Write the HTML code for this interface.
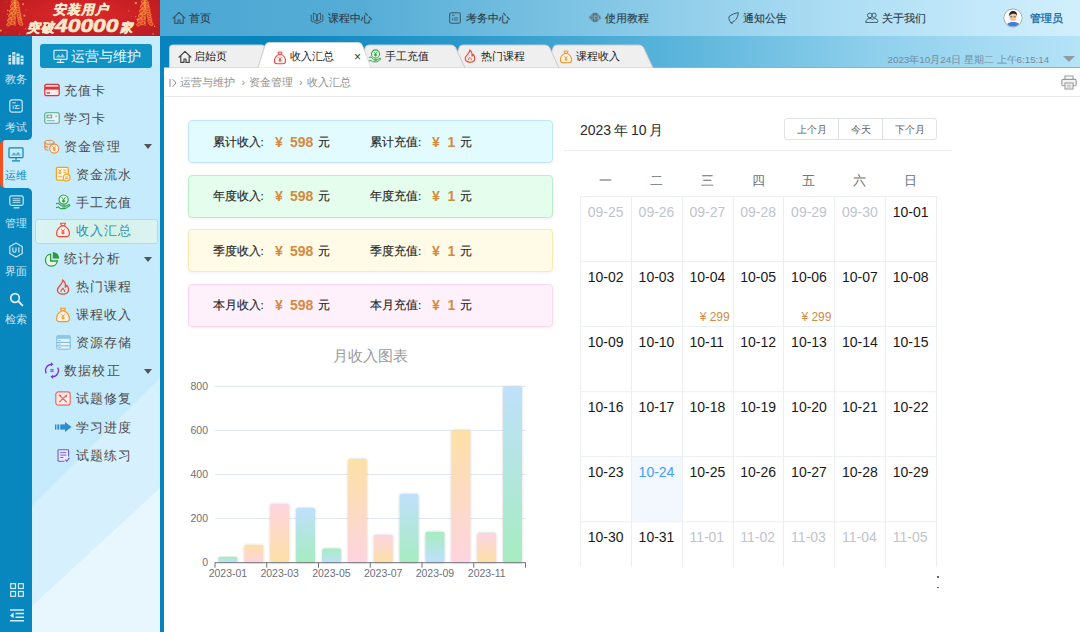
<!DOCTYPE html>
<html lang="zh"><head><meta charset="utf-8"><title>收入汇总</title>
<style>
*{box-sizing:border-box;margin:0;padding:0}
html,body{width:1080px;height:632px;overflow:hidden;background:#fff}
body{font-family:"Liberation Sans",sans-serif;position:relative;color:#333}
.abs{position:absolute}
.t{position:absolute;white-space:nowrap;line-height:1}
#banner{left:0;top:0;width:160px;height:36px;background:radial-gradient(ellipse at 50% 40%,#e02a2c 0%,#c92024 55%,#b71c22 100%);overflow:hidden}
#banner .l1{left:0;width:160px;text-align:center;top:3px;font-size:13px;font-weight:bold;font-style:italic;color:#fbeed4;letter-spacing:1px}
#banner .l2{left:0;width:160px;text-align:center;top:17px;font-size:13px;font-weight:bold;font-style:italic;color:#fbeed4}
#banner .l2 b{font-size:19px;letter-spacing:2px;position:relative;top:1px;margin-left:1px}
#nav{left:160px;top:0;width:920px;height:36px;background:linear-gradient(90deg,#4ba7d3 0%,#55add6 22%,#86c8e6 50%,#aadcf3 72%,#c4e9fa 90%,#d0effc 100%)}
#nav .t{top:13px;font-size:11px;color:#2c414d;-webkit-text-stroke:.15px #2c414d}
#tabbar{left:160px;top:36px;width:920px;height:32px;background:linear-gradient(90deg,#0784bd 0%,#0985be 12%,#2d9bcc 35%,#58b3da 55%,#8fd0ec 78%,#b5e3f8 100%);border-bottom:1px solid #a9a9a9}
#strip{left:0;top:36px;width:32px;height:596px;background:#0886be}
#strip .t{left:0;width:32px;text-align:center;font-size:11px;color:#cbe6f4}
#side{left:32px;top:36px;width:128px;height:596px;background:#c6ebfd;overflow:hidden}
#edge{left:160px;top:36px;width:4px;height:596px;background:#0784bd}
.mi{position:absolute;white-space:nowrap;line-height:1;font-size:13px;letter-spacing:1.200px;color:#4d4d4d}
.ic{position:absolute;line-height:0}
.arrow{position:absolute;width:0;height:0;border-left:4.5px solid transparent;border-right:4.5px solid transparent;border-top:5px solid #555}
#content{left:164px;top:68px;width:916px;height:564px;background:#fff;border-top-left-radius:4px}
.card{position:absolute;left:188px;width:365px;height:43px;border-radius:4px;border:1px solid;box-shadow:0 1px 3px rgba(0,0,0,.06)}
.card .t{top:15.500px;font-size:11.500px;color:#262626;-webkit-text-stroke:.15px #262626}
.card .v{font-weight:bold;font-size:14px;color:#d58a3e;top:13.500px;-webkit-text-stroke:0}
.cal-d{position:absolute;white-space:nowrap;line-height:1;font-size:14px;color:#1a1a1a}
.cal-d.o{color:#c0c4cc}
.wk{position:absolute;white-space:nowrap;line-height:1;font-size:13px;color:#6e7178;width:50px;text-align:center}
</style></head><body>

<div id="banner" class="abs">
<svg class="abs" style="left:0;top:0" width="160" height="36" viewBox="0 0 160 36">
<ellipse cx="13.4" cy="1.5" rx="2.3" ry="1.500" fill="#e43a26" stroke="#f2b443" stroke-width=".5" transform="rotate(-25 13.4 1.5)"/><ellipse cx="16.6" cy="2.2" rx="2.3" ry="1.500" fill="#e43a26" stroke="#f2b443" stroke-width=".5" transform="rotate(25 16.6 1.5)"/><ellipse cx="14.2" cy="3.9" rx="2.3" ry="1.500" fill="#e43a26" stroke="#f2b443" stroke-width=".5" transform="rotate(-25 14.2 3.9)"/><ellipse cx="17.3" cy="4.6" rx="2.3" ry="1.500" fill="#e43a26" stroke="#f2b443" stroke-width=".5" transform="rotate(25 17.3 3.9)"/><ellipse cx="12.5" cy="5.3" rx="2.3" ry="1.500" fill="#e43a26" stroke="#f2b443" stroke-width=".5" transform="rotate(-25 12.5 3.9)"/><ellipse cx="12.5" cy="6.3" rx="2.3" ry="1.500" fill="#e43a26" stroke="#f2b443" stroke-width=".5" transform="rotate(-25 12.5 6.3)"/><ellipse cx="17.5" cy="7.0" rx="2.3" ry="1.500" fill="#e43a26" stroke="#f2b443" stroke-width=".5" transform="rotate(25 17.5 6.3)"/><ellipse cx="13.8" cy="8.7" rx="2.3" ry="1.500" fill="#e43a26" stroke="#f2b443" stroke-width=".5" transform="rotate(-25 13.8 8.7)"/><ellipse cx="18.2" cy="9.4" rx="2.3" ry="1.500" fill="#e43a26" stroke="#f2b443" stroke-width=".5" transform="rotate(25 18.2 8.7)"/><ellipse cx="11.5" cy="10.1" rx="2.3" ry="1.500" fill="#e43a26" stroke="#f2b443" stroke-width=".5" transform="rotate(-25 11.5 8.7)"/><ellipse cx="11.6" cy="11.1" rx="2.3" ry="1.500" fill="#e43a26" stroke="#f2b443" stroke-width=".5" transform="rotate(-25 11.6 11.1)"/><ellipse cx="18.4" cy="11.8" rx="2.3" ry="1.500" fill="#e43a26" stroke="#f2b443" stroke-width=".5" transform="rotate(25 18.4 11.1)"/><ellipse cx="13.5" cy="13.5" rx="2.3" ry="1.500" fill="#e43a26" stroke="#f2b443" stroke-width=".5" transform="rotate(-25 13.5 13.5)"/><ellipse cx="19.2" cy="14.2" rx="2.3" ry="1.500" fill="#e43a26" stroke="#f2b443" stroke-width=".5" transform="rotate(25 19.2 13.5)"/><ellipse cx="10.4" cy="14.9" rx="2.3" ry="1.500" fill="#e43a26" stroke="#f2b443" stroke-width=".5" transform="rotate(-25 10.4 13.5)"/><ellipse cx="10.7" cy="15.9" rx="2.3" ry="1.500" fill="#e43a26" stroke="#f2b443" stroke-width=".5" transform="rotate(-25 10.7 15.9)"/><ellipse cx="19.3" cy="16.6" rx="2.3" ry="1.500" fill="#e43a26" stroke="#f2b443" stroke-width=".5" transform="rotate(25 19.3 15.9)"/><ellipse cx="13.1" cy="18.3" rx="2.3" ry="1.500" fill="#e43a26" stroke="#f2b443" stroke-width=".5" transform="rotate(-25 13.1 18.3)"/><ellipse cx="20.2" cy="19.0" rx="2.3" ry="1.500" fill="#e43a26" stroke="#f2b443" stroke-width=".5" transform="rotate(25 20.2 18.3)"/><ellipse cx="9.3" cy="19.7" rx="2.3" ry="1.500" fill="#e43a26" stroke="#f2b443" stroke-width=".5" transform="rotate(-25 9.3 18.3)"/><ellipse cx="9.8" cy="20.7" rx="2.3" ry="1.500" fill="#e43a26" stroke="#f2b443" stroke-width=".5" transform="rotate(-25 9.8 20.7)"/><ellipse cx="20.2" cy="21.4" rx="2.3" ry="1.500" fill="#e43a26" stroke="#f2b443" stroke-width=".5" transform="rotate(25 20.2 20.7)"/><ellipse cx="12.7" cy="23.1" rx="2.3" ry="1.500" fill="#e43a26" stroke="#f2b443" stroke-width=".5" transform="rotate(-25 12.7 23.1)"/><ellipse cx="21.2" cy="23.8" rx="2.3" ry="1.500" fill="#e43a26" stroke="#f2b443" stroke-width=".5" transform="rotate(25 21.2 23.1)"/><ellipse cx="8.2" cy="24.5" rx="2.3" ry="1.500" fill="#e43a26" stroke="#f2b443" stroke-width=".5" transform="rotate(-25 8.2 23.1)"/><path d="M15 0V26" stroke="#f2c14e" stroke-width=".6"/>
<ellipse cx="143.4" cy="1.5" rx="2.3" ry="1.500" fill="#e43a26" stroke="#f2b443" stroke-width=".5" transform="rotate(-25 143.4 1.5)"/><ellipse cx="146.6" cy="2.2" rx="2.3" ry="1.500" fill="#e43a26" stroke="#f2b443" stroke-width=".5" transform="rotate(25 146.6 1.5)"/><ellipse cx="144.2" cy="3.9" rx="2.3" ry="1.500" fill="#e43a26" stroke="#f2b443" stroke-width=".5" transform="rotate(-25 144.2 3.9)"/><ellipse cx="147.3" cy="4.6" rx="2.3" ry="1.500" fill="#e43a26" stroke="#f2b443" stroke-width=".5" transform="rotate(25 147.3 3.9)"/><ellipse cx="142.5" cy="5.3" rx="2.3" ry="1.500" fill="#e43a26" stroke="#f2b443" stroke-width=".5" transform="rotate(-25 142.5 3.9)"/><ellipse cx="142.5" cy="6.3" rx="2.3" ry="1.500" fill="#e43a26" stroke="#f2b443" stroke-width=".5" transform="rotate(-25 142.5 6.3)"/><ellipse cx="147.5" cy="7.0" rx="2.3" ry="1.500" fill="#e43a26" stroke="#f2b443" stroke-width=".5" transform="rotate(25 147.5 6.3)"/><ellipse cx="143.8" cy="8.7" rx="2.3" ry="1.500" fill="#e43a26" stroke="#f2b443" stroke-width=".5" transform="rotate(-25 143.8 8.7)"/><ellipse cx="148.2" cy="9.4" rx="2.3" ry="1.500" fill="#e43a26" stroke="#f2b443" stroke-width=".5" transform="rotate(25 148.2 8.7)"/><ellipse cx="141.5" cy="10.1" rx="2.3" ry="1.500" fill="#e43a26" stroke="#f2b443" stroke-width=".5" transform="rotate(-25 141.5 8.7)"/><ellipse cx="141.6" cy="11.1" rx="2.3" ry="1.500" fill="#e43a26" stroke="#f2b443" stroke-width=".5" transform="rotate(-25 141.6 11.1)"/><ellipse cx="148.4" cy="11.8" rx="2.3" ry="1.500" fill="#e43a26" stroke="#f2b443" stroke-width=".5" transform="rotate(25 148.4 11.1)"/><ellipse cx="143.5" cy="13.5" rx="2.3" ry="1.500" fill="#e43a26" stroke="#f2b443" stroke-width=".5" transform="rotate(-25 143.5 13.5)"/><ellipse cx="149.2" cy="14.2" rx="2.3" ry="1.500" fill="#e43a26" stroke="#f2b443" stroke-width=".5" transform="rotate(25 149.2 13.5)"/><ellipse cx="140.4" cy="14.9" rx="2.3" ry="1.500" fill="#e43a26" stroke="#f2b443" stroke-width=".5" transform="rotate(-25 140.4 13.5)"/><ellipse cx="140.7" cy="15.9" rx="2.3" ry="1.500" fill="#e43a26" stroke="#f2b443" stroke-width=".5" transform="rotate(-25 140.7 15.9)"/><ellipse cx="149.3" cy="16.6" rx="2.3" ry="1.500" fill="#e43a26" stroke="#f2b443" stroke-width=".5" transform="rotate(25 149.3 15.9)"/><ellipse cx="143.1" cy="18.3" rx="2.3" ry="1.500" fill="#e43a26" stroke="#f2b443" stroke-width=".5" transform="rotate(-25 143.1 18.3)"/><ellipse cx="150.2" cy="19.0" rx="2.3" ry="1.500" fill="#e43a26" stroke="#f2b443" stroke-width=".5" transform="rotate(25 150.2 18.3)"/><ellipse cx="139.3" cy="19.7" rx="2.3" ry="1.500" fill="#e43a26" stroke="#f2b443" stroke-width=".5" transform="rotate(-25 139.3 18.3)"/><ellipse cx="139.8" cy="20.7" rx="2.3" ry="1.500" fill="#e43a26" stroke="#f2b443" stroke-width=".5" transform="rotate(-25 139.8 20.7)"/><ellipse cx="150.2" cy="21.4" rx="2.3" ry="1.500" fill="#e43a26" stroke="#f2b443" stroke-width=".5" transform="rotate(25 150.2 20.7)"/><ellipse cx="142.7" cy="23.1" rx="2.3" ry="1.500" fill="#e43a26" stroke="#f2b443" stroke-width=".5" transform="rotate(-25 142.7 23.1)"/><ellipse cx="151.2" cy="23.8" rx="2.3" ry="1.500" fill="#e43a26" stroke="#f2b443" stroke-width=".5" transform="rotate(25 151.2 23.1)"/><ellipse cx="138.2" cy="24.5" rx="2.3" ry="1.500" fill="#e43a26" stroke="#f2b443" stroke-width=".5" transform="rotate(-25 138.2 23.1)"/><path d="M145 0V26" stroke="#f2c14e" stroke-width=".6"/>
<circle cx="131.3" cy="16.3" r="0.5" fill="#f6c65a" opacity="0.41"/>
<circle cx="16.5" cy="7.5" r="0.8" fill="#f6c65a" opacity="0.54"/>
<circle cx="5.2" cy="32.1" r="0.4" fill="#f6c65a" opacity="0.72"/>
<circle cx="7.8" cy="10.5" r="0.8" fill="#f6c65a" opacity="0.77"/>
<circle cx="25.6" cy="28.7" r="0.6" fill="#f6c65a" opacity="0.59"/>
<circle cx="135.9" cy="3.0" r="1.1" fill="#f6c65a" opacity="0.83"/>
<circle cx="137.6" cy="19.5" r="1.0" fill="#f6c65a" opacity="0.82"/>
<circle cx="141.2" cy="14.7" r="0.5" fill="#f6c65a" opacity="0.55"/>
<circle cx="24.4" cy="15.7" r="1.1" fill="#f6c65a" opacity="0.66"/>
<circle cx="19.4" cy="33.9" r="0.5" fill="#f6c65a" opacity="0.61"/>
<circle cx="148.2" cy="6.2" r="0.7" fill="#f6c65a" opacity="0.69"/>
<circle cx="134.4" cy="3.4" r="0.4" fill="#f6c65a" opacity="0.51"/>
<circle cx="23.0" cy="4.2" r="1.1" fill="#f6c65a" opacity="0.55"/>
<circle cx="0.8" cy="30.5" r="1.1" fill="#f6c65a" opacity="0.77"/>
<circle cx="128.6" cy="10.9" r="0.5" fill="#f6c65a" opacity="0.73"/>
<circle cx="25.8" cy="10.0" r="0.5" fill="#f6c65a" opacity="0.62"/>
<circle cx="4.1" cy="11.3" r="0.4" fill="#f6c65a" opacity="0.42"/>
<circle cx="153.1" cy="33.9" r="0.8" fill="#f6c65a" opacity="0.62"/>
<circle cx="6.2" cy="2.0" r="0.4" fill="#f6c65a" opacity="0.48"/>
<circle cx="20.3" cy="18.6" r="0.8" fill="#f6c65a" opacity="0.56"/>
<circle cx="154.7" cy="26.3" r="0.7" fill="#f6c65a" opacity="0.89"/>
<circle cx="135.7" cy="16.7" r="0.6" fill="#f6c65a" opacity="0.62"/>
<circle cx="19.4" cy="17.0" r="0.4" fill="#f6c65a" opacity="0.53"/>
<circle cx="7.3" cy="14.2" r="0.6" fill="#f6c65a" opacity="0.56"/>
<circle cx="26.7" cy="33.7" r="0.7" fill="#f6c65a" opacity="0.85"/>
<circle cx="19.6" cy="16.8" r="0.5" fill="#f6c65a" opacity="0.51"/>
</svg>
<svg class="abs" style="left:0;top:0" width="160" height="36" viewBox="0 0 160 36" font-family="Liberation Sans, sans-serif" font-weight="bold" font-style="italic" fill="#f8e9cc" stroke="#f8e9cc" stroke-linejoin="round"><text x="52.500" y="14" font-size="13" textLength="55.500" lengthAdjust="spacing" stroke-width=".45">安装用户</text><text x="27" y="31.800" font-size="13" textLength="26.500" lengthAdjust="spacing" stroke-width=".45">突破</text><text x="55" y="32" font-size="17.500" textLength="63.500" lengthAdjust="spacingAndGlyphs" stroke-width=".6">40000</text><text x="119.500" y="31.800" font-size="12.500" stroke-width=".45">家</text></svg>
</div>
<div id="nav" class="abs">
<div class="ic" style="left:12px;top:11px"><svg width="14" height="14" viewBox="0 0 14 14"><path d="M1 7.200L7 1.400l6 5.800M2.800 6v6.400h3.200V9h2v3.400h3.200V6" fill="none" stroke="#3d5766" stroke-width="1.200" stroke-linejoin="round" stroke-linecap="round"/></svg></div><div class="t" style="left:29px">首页</div>
<div class="ic" style="left:150px;top:11.5px"><svg width="14" height="12" viewBox="0 0 14 12"><path d="M1.200 2.800v6.200l5.800 2.500 5.800-2.500V2.800" fill="none" stroke="#3d5766" stroke-width="1" stroke-linejoin="round"/><path d="M3.400 1l3.200 1.600v6.600L3.400 7.800zM10.600 1L7.400 2.600v6.600l3.200-1.400z" fill="none" stroke="#3d5766" stroke-width=".95" stroke-linejoin="round"/></svg></div><div class="t" style="left:167.5px">课程中心</div>
<div class="ic" style="left:289px;top:12px"><svg width="12" height="12" viewBox="0 0 13 13"><rect x=".7" y=".7" width="11.600" height="11.600" rx="2" fill="none" stroke="#3d5766" stroke-width="1.100"/><path d="M3 3.400h3.400M5.400 6.400h4.600M5.400 8.600h4.600M4 6.200v3" stroke="#3d5766" stroke-width=".9" fill="none"/></svg></div><div class="t" style="left:306px">考务中心</div>
<div class="ic" style="left:427.5px;top:12px"><svg width="14" height="11" viewBox="0 0 14 11"><ellipse cx="7" cy="5.500" rx="4.600" ry="4.700" fill="#4a6473" opacity=".9"/><path d="M7 .8v9.400M4.600 1.600c-1 2.400-1 5.400 0 7.800M9.400 1.600c1 2.400 1 5.400 0 7.800" fill="none" stroke="#8fb8cf" stroke-width=".5"/><rect x="0.600" y="3.700" width="12.800" height="3.600" fill="#8db4c9"/><path d="M2 6.800V4.200l1.600 2.600V4.200M6 4.200H4.700v2.600H6M4.700 5.500h1M6.800 4.200l.7 2.600.7-2 .7 2 .7-2.600M12.200 4.300h-1.300v1.100h1.300v1.300h-1.400" fill="none" stroke="#3d5766" stroke-width=".55"/></svg></div><div class="t" style="left:445px">使用教程</div>
<div class="ic" style="left:567.5px;top:12px"><svg width="11" height="12" viewBox="0 0 11 12"><path d="M10.300 .7C7.400 1 3.400 2.400 .9 4.800C.6 7.200 1.500 9.400 3.300 10.700C7 9.400 10 6 10.300 .7Z" fill="none" stroke="#3d5766" stroke-width="1" stroke-linejoin="round"/><path d="M2.800 10.600l1.300.8" stroke="#3d5766" stroke-width="1.100" stroke-linecap="round"/></svg></div><div class="t" style="left:583px">通知公告</div>
<div class="ic" style="left:705px;top:12px"><svg width="13.500" height="11.700" viewBox="0 0 15 13"><circle cx="5.400" cy="3.800" r="2.600" fill="none" stroke="#3d5766" stroke-width="1.050"/><circle cx="10" cy="3.600" r="2.400" fill="none" stroke="#3d5766" stroke-width="1.050"/><path d="M.8 11.600c0-2.600 1.800-4.400 4.600-4.400 1.200 0 2.200.4 3 1 .6-.6 1.400-1 2.400-1 2 0 3.400 1.400 3.400 3.600 0 .6-.4.800-.8.800H.8z" fill="none" stroke="#3d5766" stroke-width="1.050" stroke-linejoin="round"/></svg></div><div class="t" style="left:721.5px">关于我们</div>
<svg class="abs" style="left:843px;top:8.300px" width="20" height="20" viewBox="0 0 20 20"><defs><clipPath id="av"><circle cx="10" cy="10" r="8.600"/></clipPath></defs><circle cx="10" cy="10" r="9" fill="#fff" stroke="#7f8a92" stroke-width=".8"/><g clip-path="url(#av)"><rect x="0" y="0" width="20" height="20" fill="#fdfdfd"/><path d="M2.500 20c0-4 3-6 7.500-6s7.500 2 7.500 6z" fill="#3f7fd6"/><ellipse cx="10" cy="9" rx="3.600" ry="4.200" fill="#f1c7a4"/><path d="M6.200 8c-.4-3 1.400-5 4-5s4.200 1.600 3.800 5c-.6-1.400-1.400-2.200-2.600-2.200-1.800 0-3.800.2-5.200 2.200z" fill="#2a2420"/><path d="M7.200 8.800h2.200M10.600 8.800h2.200" stroke="#333" stroke-width=".7"/></g></svg>
<div class="t" style="left:870px;color:#0d64a6;-webkit-text-stroke:.25px #0d64a6">管理员</div>
</div>
<div id="tabbar" class="abs"></div>
<svg class="abs" style="left:160px;top:36px" width="920" height="32" viewBox="0 0 920 32">
<path d="M386 32L393 12Q393.5 9 397 9H479Q482.5 9 483.8 12L493 32Z" fill="#efefef" stroke="#c9c9c9" stroke-width="1"/>
<path d="M292 32L299 12Q299.5 9 303 9H385Q388.5 9 389.8 12L399 32Z" fill="#efefef" stroke="#c9c9c9" stroke-width="1"/>
<path d="M198 32L205 12Q205.5 9 209 9H291Q294.5 9 295.8 12L305 32Z" fill="#efefef" stroke="#c9c9c9" stroke-width="1"/>
<path d="M9.500 32V12Q9.500 9 12.500 9H102Q105 9 104 12L98 32Z" fill="#efefef" stroke="#c9c9c9" stroke-width="1"/>
<path d="M98 32L105 9.500Q106 6.500 109 6.500H198Q201.500 6.500 202.500 9.500L211 32Z" fill="#fff" stroke="#d4d4d4" stroke-width=".8"/>
</svg>
<div class="ic" style="left:178px;top:50px"><svg width="14" height="14" viewBox="0 0 14 14"><path d="M1 7.200L7 1.400l6 5.800M2.800 6v6.400h3.200V9h2v3.400h3.200V6" fill="none" stroke="#444" stroke-width="1.200" stroke-linejoin="round" stroke-linecap="round"/></svg></div><div class="t" style="left:193.500px;top:51px;font-size:11px;color:#222">启始页</div>
<div class="ic" style="left:273px;top:50.500px"><svg width="14" height="14" viewBox="0 0 16 16"><path d="M5.6 1.2h4.8l-.9 2.6H6.5z" fill="#fdeeee" stroke="#ea4a3a" stroke-width="1.1" stroke-linejoin="round"/><path d="M6.4 3.9C3.6 5.6 1.6 8.6 1.6 11.4c0 2 1.3 3.2 3.2 3.2h6.4c1.9 0 3.2-1.2 3.2-3.2 0-2.8-2-5.8-4.8-7.5z" fill="#fdeeee" stroke="#ea4a3a" stroke-width="1.2" stroke-linejoin="round"/><path d="M6.4 7.2L8 9.4l1.6-2.2M8 9.4v3M6.5 10h3M6.5 11.3h3" fill="none" stroke="#ea4a3a" stroke-width="0.95"/></svg></div><div class="t" style="left:290px;top:51px;font-size:11px;color:#222">收入汇总</div>
<div class="t" style="left:354px;top:51px;font-size:12px;color:#333">×</div>
<div class="ic" style="left:368px;top:49px"><svg width="14" height="14" viewBox="0 0 16 16"><circle cx="8.6" cy="5.6" r="4.6" fill="#e9f8ec" stroke="#2fa446" stroke-width="1.2"/><path d="M6.8 3.3l1.8 2.4 1.8-2.4M8.6 5.6v3M7 6.3h3.2M7 7.5h3.2" fill="none" stroke="#2fa446" stroke-width="0.95"/><path d="M1 9.6l2.4-.4 2.8 2.6h3.4c.8 0 .8 1.2 0 1.2H7.4M9.8 12.4l4-1.8c.9-.3 1.4.7.7 1.2l-4.3 2.8H5.4L3.4 13 1 13.6" fill="none" stroke="#2fa446" stroke-width="1.1" stroke-linejoin="round"/></svg></div><div class="t" style="left:385px;top:51px;font-size:11px;color:#222">手工充值</div>
<div class="ic" style="left:464px;top:49px"><svg width="12" height="14" viewBox="0 0 14 16"><path d="M6.6 1c.5 2.2-.8 3.4-2.2 5C3 7.600 1.400 9 1.400 11c0 2.400 2.200 4.200 5.400 4.200s5.800-1.800 5.800-4.600c0-1.800-.8-3.200-1.800-4.400-.2 1-.7 1.700-1.500 2C9.800 5.400 8.800 2.600 6.600 1z" fill="none" stroke="#f0492e" stroke-width="1.3" stroke-linejoin="round"/><path d="M5 12.400c0-1.400 1-2 1.800-3 .8 1 2 1.800 2 3" fill="none" stroke="#f0492e" stroke-width="1.1" stroke-linecap="round"/></svg></div><div class="t" style="left:480.500px;top:51px;font-size:11px;color:#222">热门课程</div>
<div class="ic" style="left:559px;top:49.500px"><svg width="14" height="14" viewBox="0 0 16 16"><path d="M5.6 1.2h4.8l-.9 2.6H6.5z" fill="#fff3df" stroke="#f0962a" stroke-width="1.1" stroke-linejoin="round"/><path d="M6.4 3.9C3.6 5.6 1.6 8.6 1.6 11.4c0 2 1.3 3.2 3.2 3.2h6.4c1.9 0 3.2-1.2 3.2-3.2 0-2.8-2-5.8-4.8-7.5z" fill="#fff3df" stroke="#f0962a" stroke-width="1.2" stroke-linejoin="round"/><path d="M6.4 7.2L8 9.4l1.6-2.2M8 9.4v3M6.5 10h3M6.5 11.3h3" fill="none" stroke="#f0962a" stroke-width="0.95"/></svg></div><div class="t" style="left:576px;top:51px;font-size:11px;color:#222">课程收入</div>
<div class="t" style="left:887.500px;top:54.500px;font-size:9.800px;color:#718b9c">2023年10月24日 星期二 上午6:15:14</div>
<div class="abs" style="left:1063px;top:56px;width:0;height:0;border-left:6px solid transparent;border-right:6px solid transparent;border-top:6px solid #8f9aa2"></div>
<div id="strip" class="abs">
<div class="abs" style="left:0;top:104px;width:32px;height:48.400px;background:#c6ebfd;border-left:3px solid #f4511e;border-radius:5px 0 0 5px"></div><div class="abs" style="left:28px;top:100px;width:4px;height:4px;background:radial-gradient(circle at 0 0,rgba(198,235,253,0) 3.400px,#c6ebfd 4px)"></div><div class="abs" style="left:28px;top:152.400px;width:4px;height:4px;background:radial-gradient(circle at 0 100%,rgba(198,235,253,0) 3.400px,#c6ebfd 4px)"></div>
<div class="ic" style="left:8.0px;top:15.0px"><svg width="16" height="14" viewBox="0 0 16 14"><rect x="0.500" y="4" width="2.600" height="9.500" rx=".6" fill="#cbe6f4"/><rect x="4.200" y="1" width="3.200" height="12.500" rx=".6" fill="#cbe6f4"/><rect x="8.400" y="2.600" width="3.200" height="10.900" rx=".6" fill="#cbe6f4"/><rect x="12.600" y="4.600" width="2.900" height="8.900" rx=".6" fill="#cbe6f4"/><path d="M.5 6.500h2.600M.5 10.500h2.600M4.200 4h3.200M8.400 5.600h3.200M12.600 7.400h2.900M12.600 10.400h2.900" stroke="#0886be" stroke-width=".9"/></svg></div>
<div class="t" style="top:37.5px;color:#cbe6f4">教务</div>
<div class="ic" style="left:9.0px;top:63.0px"><svg width="14" height="14" viewBox="0 0 14 14"><rect x=".8" y=".8" width="12.400" height="12.400" rx="2.200" fill="none" stroke="#cbe6f4" stroke-width="1.200"/><path d="M3.200 3.800h3.600" stroke="#cbe6f4" stroke-width="1"/><path d="M5.600 6.600h5M5.600 9.400h5M4.200 6.400v3.600M7.600 6.600l-1 3.200" stroke="#cbe6f4" stroke-width=".9" fill="none"/></svg></div>
<div class="t" style="top:85.5px;color:#cbe6f4">考试</div>
<div class="ic" style="left:8.0px;top:110.5px"><svg width="16" height="15" viewBox="0 0 16 15"><rect x="1" y=".8" width="14" height="9.800" rx=".8" fill="none" stroke="#0a84bb" stroke-width="1.200"/><path d="M3 8.600l3-3.400 2 2.200 2-3 3 4.200z" fill="#0a84bb" opacity=".55"/><path d="M8 10.600v2.200M4 13.800h8" stroke="#0a84bb" stroke-width="1.300"/></svg></div>
<div class="t" style="top:133.5px;color:#0a84bb">运维</div>
<div class="ic" style="left:8.5px;top:159.0px"><svg width="15" height="14" viewBox="0 0 15 14"><rect x=".8" y=".8" width="13.400" height="9.600" rx="1.800" fill="none" stroke="#cbe6f4" stroke-width="1.200"/><path d="M3.600 3.800h7.800M3.600 5.600h7.800M3.600 7.400h7.800" stroke="#cbe6f4" stroke-width=".9"/><path d="M4.600 12.800h5.800" stroke="#cbe6f4" stroke-width="1.300"/></svg></div>
<div class="t" style="top:181.5px;color:#cbe6f4">管理</div>
<div class="ic" style="left:8.0px;top:206.0px"><svg width="16" height="16" viewBox="0 0 16 16"><path d="M8 .9l6.200 3.500v7.200L8 15.100 1.800 11.600V4.400z" fill="none" stroke="#cbe6f4" stroke-width="1.200" stroke-linejoin="round"/><path d="M4.800 5.400v3.200c0 2.200 3.200 2.200 3.200 0V5.400M10.800 5.200v5.200" fill="none" stroke="#cbe6f4" stroke-width="1.200"/></svg></div>
<div class="t" style="top:229.5px;color:#cbe6f4">界面</div>
<div class="ic" style="left:8.5px;top:256.0px"><svg width="15" height="15" viewBox="0 0 15 15"><circle cx="6" cy="6" r="4.300" fill="none" stroke="#e2f1f9" stroke-width="1.700"/><path d="M9.400 9.400l4 4" stroke="#e2f1f9" stroke-width="2" stroke-linecap="round"/></svg></div>
<div class="t" style="top:277.5px;color:#cbe6f4">检索</div>
<svg class="abs" style="left:10px;top:547px" width="14" height="14" viewBox="0 0 14 14"><rect x=".7" y=".7" width="4.800" height="4.800" fill="none" stroke="#d6ecf7" stroke-width="1.200"/><rect x="8.500" y=".7" width="4.800" height="4.800" fill="none" stroke="#d6ecf7" stroke-width="1.200"/><rect x=".7" y="8.500" width="4.800" height="4.800" fill="none" stroke="#d6ecf7" stroke-width="1.200"/><rect x="8.500" y="8.500" width="4.800" height="4.800" fill="none" stroke="#d6ecf7" stroke-width="1.200"/></svg>
<svg class="abs" style="left:10px;top:573px" width="14" height="13" viewBox="0 0 14 13"><path d="M0 1h14M5.500 4.600H14M5.500 8.200H14M0 11.800h14" stroke="#d6ecf7" stroke-width="1.500"/><path d="M3.600 3.600v5.600L0 6.400z" fill="#d6ecf7"/></svg>
</div>
<div id="side" class="abs">
<svg class="abs" style="left:0;top:0" width="128" height="596" viewBox="0 0 128 596"><path d="M128 342L0 470V596H128Z" fill="#d6f0fe"/><path d="M128 452L0 570V596H128Z" fill="#e8f7fe"/></svg>
<div class="abs" style="left:8px;top:8px;width:112px;height:24px;background:#0e93c4;border-radius:3px"></div>
<svg class="abs" style="left:21px;top:13px" width="15" height="15" viewBox="0 0 16 15"><rect x="1" y=".8" width="14" height="9.800" rx=".8" fill="none" stroke="#e8f6fd" stroke-width="1.200"/><path d="M3 8.600l3-3.400 2 2.200 2-3 3 4.200z" fill="#e8f6fd" opacity=".6"/><path d="M8 10.600v2.200M4 13.800h8" stroke="#e8f6fd" stroke-width="1.300"/></svg>
<div class="t" style="left:39px;top:13px;font-size:14px;color:#f2fbff">运营与维护</div>
<div class="abs" style="left:2.500px;top:183px;width:123px;height:24.500px;background:linear-gradient(90deg,#dbf3f4,#d4f2e6 60%,#dbf3f4);border:1px solid #a9dcf6;border-radius:3px"></div>
<div class="ic" style="left:11.5px;top:47.0px"><svg width="16" height="14" viewBox="0 0 16 14"><rect x="0.8" y="1.3" width="14.4" height="11.4" rx="1.6" fill="#fdeaea" stroke="#d9363e" stroke-width="1.3"/><rect x="1" y="3.6" width="14" height="3" fill="#d9363e"/><rect x="2.6" y="9.3" width="3.4" height="1.3" fill="#d9363e"/></svg></div><div class="mi" style="left:32px;top:47.5px;color:#4d4d4d">充值卡</div>
<div class="ic" style="left:11.5px;top:75.1px"><svg width="16" height="14" viewBox="0 0 16 14"><rect x="0.8" y="1.8" width="14.4" height="10.4" rx="1.4" fill="#e8f6ef" stroke="#5aa58a" stroke-width="1.1"/><rect x="3" y="4.2" width="4.6" height="2.6" fill="none" stroke="#5aa58a" stroke-width="1"/><rect x="2.8" y="9" width="8" height="1.2" fill="#8ab8d8"/><rect x="11.2" y="4.6" width="2" height="1.2" fill="#8ab8d8"/></svg></div><div class="mi" style="left:32px;top:75.6px;color:#4d4d4d">学习卡</div>
<div class="ic" style="left:11.0px;top:102.7px"><svg width="17" height="15" viewBox="0 0 17 15"><ellipse cx="6.4" cy="3.3" rx="4.6" ry="2" fill="none" stroke="#f08a3c" stroke-width="1.1"/><path d="M1.8 3.4v5.8c0 1 1.6 1.9 3.6 2.1M1.8 6.3c0 .9 1.5 1.7 3.4 1.9M11 3.4v1.2" fill="none" stroke="#f08a3c" stroke-width="1.1"/><circle cx="11.2" cy="9.6" r="4.5" fill="#fff4e8" stroke="#f08a3c" stroke-width="1.1"/><path d="M9.6 7.2l1.6 2.2 1.6-2.2M11.2 9.4v2.8M9.7 9.8h3M9.7 11h3" fill="none" stroke="#f08a3c" stroke-width="0.9"/></svg></div><div class="mi" style="left:32px;top:103.7px;color:#4d4d4d">资金管理</div>
<div class="arrow" style="left:112px;top:108.2px"></div>
<div class="ic" style="left:23.0px;top:130.2px"><svg width="16" height="16" viewBox="0 0 16 16"><path d="M9.2 14.2H2.6c-.7 0-1.2-.5-1.2-1.2V2.6c0-.7.5-1.2 1.2-1.2h9.4c.7 0 1.2.5 1.2 1.2v5.2" fill="#fff6e4" stroke="#f0a020" stroke-width="1.2"/><path d="M3.4 3.4l1.5 1.9 1.5-1.9M4.9 5.3v2.9M3.5 6h2.8M3.5 7.2h2.8M8.3 4.2h3M8.3 6.4h3M3.4 10.6h3.4" fill="none" stroke="#f0a020" stroke-width="0.9"/><circle cx="11.6" cy="11.6" r="3.4" fill="#fff6e4" stroke="#f0a020" stroke-width="1.2"/><path d="M10 11h3.2M10 12.4h3.2" stroke="#f0a020" stroke-width="0.9"/></svg></div><div class="mi" style="left:43.599999999999994px;top:131.7px;color:#4d4d4d">资金流水</div>
<div class="ic" style="left:23.0px;top:158.3px"><svg width="16" height="16" viewBox="0 0 16 16"><circle cx="8.6" cy="5.6" r="4.6" fill="#e9f8ec" stroke="#2fa446" stroke-width="1.2"/><path d="M6.8 3.3l1.8 2.4 1.8-2.4M8.6 5.6v3M7 6.3h3.2M7 7.5h3.2" fill="none" stroke="#2fa446" stroke-width="0.95"/><path d="M1 9.6l2.4-.4 2.8 2.6h3.4c.8 0 .8 1.2 0 1.2H7.4M9.8 12.4l4-1.8c.9-.3 1.4.7.7 1.2l-4.3 2.8H5.4L3.4 13 1 13.6" fill="none" stroke="#2fa446" stroke-width="1.1" stroke-linejoin="round"/></svg></div><div class="mi" style="left:43.599999999999994px;top:159.8px;color:#4d4d4d">手工充值</div>
<div class="ic" style="left:23.0px;top:186.4px"><svg width="16" height="16" viewBox="0 0 16 16"><path d="M5.6 1.2h4.8l-.9 2.6H6.5z" fill="#fdeeee" stroke="#ea4a3a" stroke-width="1.1" stroke-linejoin="round"/><path d="M6.4 3.9C3.6 5.6 1.6 8.6 1.6 11.4c0 2 1.3 3.2 3.2 3.2h6.4c1.9 0 3.2-1.2 3.2-3.2 0-2.8-2-5.8-4.8-7.5z" fill="#fdeeee" stroke="#ea4a3a" stroke-width="1.2" stroke-linejoin="round"/><path d="M6.4 7.2L8 9.4l1.6-2.2M8 9.4v3M6.5 10h3M6.5 11.3h3" fill="none" stroke="#ea4a3a" stroke-width="0.95"/></svg></div><div class="mi" style="left:43.599999999999994px;top:187.9px;color:#2e8cc0">收入汇总</div>
<div class="ic" style="left:11.5px;top:214.5px"><svg width="16" height="16" viewBox="0 0 16 16"><path d="M6.6 3.2A6 6 0 1 0 13.4 10H6.6z" fill="#e7f6e9" stroke="#2c9b3c" stroke-width="1.3" stroke-linejoin="round"/><path d="M8.8 0.9a6.4 6.4 0 0 1 6.3 6.5H8.8z" fill="#2c9b3c"/></svg></div><div class="mi" style="left:32px;top:216.0px;color:#4d4d4d">统计分析</div>
<div class="arrow" style="left:112px;top:220.5px"></div>
<div class="ic" style="left:24.0px;top:242.6px"><svg width="14" height="16" viewBox="0 0 14 16"><path d="M6.6 1c.5 2.2-.8 3.4-2.2 5C3 7.600 1.400 9 1.400 11c0 2.400 2.200 4.200 5.400 4.200s5.800-1.800 5.800-4.600c0-1.800-.8-3.200-1.800-4.400-.2 1-.7 1.700-1.500 2C9.800 5.400 8.800 2.600 6.600 1z" fill="none" stroke="#f0492e" stroke-width="1.3" stroke-linejoin="round"/><path d="M5 12.400c0-1.400 1-2 1.800-3 .8 1 2 1.800 2 3" fill="none" stroke="#f0492e" stroke-width="1.1" stroke-linecap="round"/></svg></div><div class="mi" style="left:43.599999999999994px;top:244.1px;color:#4d4d4d">热门课程</div>
<div class="ic" style="left:23.0px;top:270.6px"><svg width="16" height="16" viewBox="0 0 16 16"><path d="M5.6 1.2h4.8l-.9 2.6H6.5z" fill="#fff3df" stroke="#f0962a" stroke-width="1.1" stroke-linejoin="round"/><path d="M6.4 3.9C3.6 5.6 1.6 8.6 1.6 11.4c0 2 1.3 3.2 3.2 3.2h6.4c1.9 0 3.2-1.2 3.2-3.2 0-2.8-2-5.8-4.8-7.5z" fill="#fff3df" stroke="#f0962a" stroke-width="1.2" stroke-linejoin="round"/><path d="M6.4 7.2L8 9.4l1.6-2.2M8 9.4v3M6.5 10h3M6.5 11.3h3" fill="none" stroke="#f0962a" stroke-width="0.95"/></svg></div><div class="mi" style="left:43.599999999999994px;top:272.1px;color:#4d4d4d">课程收入</div>
<div class="ic" style="left:23.5px;top:299.2px"><svg width="15" height="15" viewBox="0 0 15 15"><rect x="0.8" y="0.8" width="13.4" height="13.4" rx="1" fill="#e4f3fc" stroke="#7ab8e0" stroke-width="1"/><rect x="0.8" y="0.8" width="13.4" height="3" fill="#8ec5e8"/><path d="M.8 7.4h13.400M.8 10.800h13.400" stroke="#7ab8e0" stroke-width="1"/><path d="M2.6 5.600h2M2.600 9.100h2M2.600 12.500h2" stroke="#7ab8e0" stroke-width="1"/></svg></div><div class="mi" style="left:43.599999999999994px;top:300.2px;color:#4d4d4d">资源存储</div>
<div class="ic" style="left:11.5px;top:326.3px"><svg width="16" height="17" viewBox="0 0 16 17"><path d="M2.300 11.400A6.200 6.200 0 0 1 8 2.300M13.700 5.600A6.200 6.200 0 0 1 8 14.700" fill="none" stroke="#7a2fe0" stroke-width="1.3"/><path d="M6.900 0.300l2.600 2-2.600 2zM9.100 16.700l-2.600-2 2.600-2z" fill="#7a2fe0"/><path d="M6.400 7.700h3.200M6.400 9.300h3.200" stroke="#7a2fe0" stroke-width="1.100"/></svg></div><div class="mi" style="left:32px;top:328.3px;color:#4d4d4d">数据校正</div>
<div class="arrow" style="left:112px;top:332.8px"></div>
<div class="ic" style="left:23.0px;top:355.4px"><svg width="16" height="15" viewBox="0 0 16 15"><rect x="0.800" y="0.800" width="14.400" height="13.400" rx="2.600" fill="#fdecec" stroke="#ea6a5e" stroke-width="1.200"/><path d="M4 4l7.600 7M11.600 4L4.400 11M4 4l1.800.4M11.600 4l-.4 1.800" fill="none" stroke="#ea6a5e" stroke-width="1.100" stroke-linecap="round"/></svg></div><div class="mi" style="left:43.599999999999994px;top:356.4px;color:#4d4d4d">试题修复</div>
<div class="ic" style="left:22.5px;top:386.0px"><svg width="17" height="10" viewBox="0 0 17 10"><rect x="0" y="2.400" width="1.400" height="5.200" fill="#2f8ad0"/><rect x="2.400" y="2.400" width="1.800" height="5.200" fill="#2f8ad0"/><rect x="5.200" y="2.400" width="5" height="5.200" fill="#2f8ad0"/><path d="M10 0l6.600 5L10 10z" fill="#2f8ad0"/></svg></div><div class="mi" style="left:43.599999999999994px;top:384.5px;color:#4d4d4d">学习进度</div>
<div class="ic" style="left:24.5px;top:412.5px"><svg width="13" height="13" viewBox="0 0 14 14"><path d="M12.400 8V1.700c0-.5-.4-.9-.9-.9H2c-.5 0-.9.400-.9.900v10.600c0 .5.400.9.900.9h6" fill="#eeeafc" stroke="#6a5ad8" stroke-width="1.200"/><path d="M3.400 4h6.600M3.400 6.600h6.600M3.400 9.200h3.600" stroke="#6a5ad8" stroke-width="1"/><path d="M9 11.400l1.600 1.600 2.800-3.400" fill="none" stroke="#6a5ad8" stroke-width="1.200"/></svg></div><div class="mi" style="left:43.599999999999994px;top:412.5px;color:#4d4d4d">试题练习</div>
</div>
<div id="edge" class="abs"></div>
<div id="content" class="abs"></div>
<svg class="abs" style="left:169.300px;top:78px" width="8" height="10" viewBox="0 0 8 10"><path d="M1 1v8M3.600 1.200L7 5 3.600 8.800" fill="none" stroke="#8a8a8a" stroke-width="1"/></svg>
<div class="t" style="left:180px;top:77.300px;font-size:11px;color:#8f8f8f">运营与维护</div><div class="t" style="left:241.500px;top:76.500px;font-size:11px;color:#8f8f8f">›</div><div class="t" style="left:249px;top:77px;font-size:11px;color:#8f8f8f">资金管理</div><div class="t" style="left:299px;top:76.500px;font-size:11px;color:#8f8f8f">›</div><div class="t" style="left:306.500px;top:77px;font-size:11px;color:#8f8f8f">收入汇总</div>
<div class="abs" style="left:164px;top:96px;width:916px;height:1px;background:#e9e9e9"></div>
<svg class="abs" style="left:1061px;top:75px" width="16" height="15" viewBox="0 0 16 15"><path d="M4 4.400V1h8v3.400" fill="none" stroke="#9a9a9a" stroke-width="1.100"/><rect x=".8" y="4.400" width="14.400" height="6.400" rx="1.400" fill="#f3f3f3" stroke="#9a9a9a" stroke-width="1.100"/><rect x="4" y="8" width="8" height="6" fill="#fff" stroke="#9a9a9a" stroke-width="1.100"/><path d="M5.600 10.200h4.800M5.600 12h4.800" stroke="#9a9a9a" stroke-width=".8"/></svg>
<div class="card" style="top:120.2px;background:#e2fbff;border-color:#c4e4fb"><div class="t" style="left:23.5px">累计收入:</div><div class="t v" style="left:86px">¥</div><div class="t v" style="left:101px">598</div><div class="t" style="left:128.5px">元</div><div class="t" style="left:181px">累计充值:</div><div class="t v" style="left:243px">¥</div><div class="t v" style="left:258.5px">1</div><div class="t" style="left:270.5px">元</div></div>
<div class="card" style="top:174.7px;background:#e4fdec;border-color:#b9edc9"><div class="t" style="left:23.5px">年度收入:</div><div class="t v" style="left:86px">¥</div><div class="t v" style="left:101px">598</div><div class="t" style="left:128.5px">元</div><div class="t" style="left:181px">年度充值:</div><div class="t v" style="left:243px">¥</div><div class="t v" style="left:258.5px">1</div><div class="t" style="left:270.5px">元</div></div>
<div class="card" style="top:229.1px;background:#fffbe7;border-color:#fde8ad"><div class="t" style="left:23.5px">季度收入:</div><div class="t v" style="left:86px">¥</div><div class="t v" style="left:101px">598</div><div class="t" style="left:128.5px">元</div><div class="t" style="left:181px">季度充值:</div><div class="t v" style="left:243px">¥</div><div class="t v" style="left:258.5px">1</div><div class="t" style="left:270.5px">元</div></div>
<div class="card" style="top:283.6px;background:#fff1fb;border-color:#fdd7ee"><div class="t" style="left:23.5px">本月收入:</div><div class="t v" style="left:86px">¥</div><div class="t v" style="left:101px">598</div><div class="t" style="left:128.5px">元</div><div class="t" style="left:181px">本月充值:</div><div class="t v" style="left:243px">¥</div><div class="t v" style="left:258.5px">1</div><div class="t" style="left:270.5px">元</div></div>
<div class="t" style="left:270px;width:200px;text-align:center;top:347.500px;font-size:15px;color:#999">月收入图表</div>
<svg class="abs" style="left:180px;top:370.700px" width="370" height="220" viewBox="180 370 370 220" font-family="Liberation Sans, sans-serif">
<defs>
<linearGradient id="g0" x1="0" y1="0" x2="0" y2="1"><stop offset="0" stop-color="#a6ecc0"/><stop offset="1" stop-color="#bfe0fb"/></linearGradient>
<linearGradient id="g1" x1="0" y1="0" x2="0" y2="1"><stop offset="0" stop-color="#fde0a6"/><stop offset="1" stop-color="#fdd4e0"/></linearGradient>
<linearGradient id="g2" x1="0" y1="0" x2="0" y2="1"><stop offset="0" stop-color="#fdd4e0"/><stop offset="1" stop-color="#fde0a6"/></linearGradient>
<linearGradient id="g3" x1="0" y1="0" x2="0" y2="1"><stop offset="0" stop-color="#bfe0fb"/><stop offset="1" stop-color="#a6ecc0"/></linearGradient>
<filter id="sh" x="-20%" y="-5%" width="140%" height="110%"><feDropShadow dx="0" dy="0" stdDeviation="0.900" flood-color="#000" flood-opacity=".22"/></filter>
</defs>
<path d="M215.0 517.62H525.5" stroke="#e0e6f1" stroke-width="1"/>
<path d="M215.0 473.54H525.5" stroke="#e0e6f1" stroke-width="1"/>
<path d="M215.0 429.46H525.5" stroke="#e0e6f1" stroke-width="1"/>
<path d="M215.0 385.38H525.5" stroke="#e0e6f1" stroke-width="1"/>
<text x="208" y="565.30" text-anchor="end" font-size="10.500" fill="#6e7079">0</text>
<text x="208" y="521.22" text-anchor="end" font-size="10.500" fill="#6e7079">200</text>
<text x="208" y="477.14" text-anchor="end" font-size="10.500" fill="#6e7079">400</text>
<text x="208" y="433.06" text-anchor="end" font-size="10.500" fill="#6e7079">600</text>
<text x="208" y="388.98" text-anchor="end" font-size="10.500" fill="#6e7079">800</text>
<rect x="218.44" y="555.75" width="19.0" height="5.95" rx="2" fill="url(#g0)" filter="url(#sh)"/>
<rect x="244.31" y="543.85" width="19.0" height="17.85" rx="2" fill="url(#g1)" filter="url(#sh)"/>
<rect x="270.19" y="502.63" width="19.0" height="59.07" rx="2" fill="url(#g2)" filter="url(#sh)"/>
<rect x="296.06" y="507.04" width="19.0" height="54.66" rx="2" fill="url(#g3)" filter="url(#sh)"/>
<rect x="321.94" y="547.59" width="19.0" height="14.11" rx="2" fill="url(#g0)" filter="url(#sh)"/>
<rect x="347.81" y="458.11" width="19.0" height="103.59" rx="2" fill="url(#g1)" filter="url(#sh)"/>
<rect x="373.69" y="533.71" width="19.0" height="27.99" rx="2" fill="url(#g2)" filter="url(#sh)"/>
<rect x="399.56" y="492.94" width="19.0" height="68.76" rx="2" fill="url(#g3)" filter="url(#sh)"/>
<rect x="425.44" y="530.84" width="19.0" height="30.86" rx="2" fill="url(#g0)" filter="url(#sh)"/>
<rect x="451.31" y="429.24" width="19.0" height="132.46" rx="2" fill="url(#g1)" filter="url(#sh)"/>
<rect x="477.19" y="531.95" width="19.0" height="29.75" rx="2" fill="url(#g2)" filter="url(#sh)"/>
<rect x="503.06" y="385.60" width="19.0" height="176.10" rx="2" fill="url(#g3)" filter="url(#sh)"/>
<path d="M215.0 561.7H525.5" stroke="#6e7079" stroke-width="1"/>
<path d="M215.00 561.7v5" stroke="#6e7079" stroke-width="1"/>
<path d="M266.75 561.7v5" stroke="#6e7079" stroke-width="1"/>
<path d="M318.50 561.7v5" stroke="#6e7079" stroke-width="1"/>
<path d="M370.25 561.7v5" stroke="#6e7079" stroke-width="1"/>
<path d="M422.00 561.7v5" stroke="#6e7079" stroke-width="1"/>
<path d="M473.75 561.7v5" stroke="#6e7079" stroke-width="1"/>
<path d="M525.50 561.7v5" stroke="#6e7079" stroke-width="1"/>
<text x="227.94" y="576" text-anchor="middle" font-size="10.500" fill="#6e7079">2023-01</text>
<text x="279.69" y="576" text-anchor="middle" font-size="10.500" fill="#6e7079">2023-03</text>
<text x="331.44" y="576" text-anchor="middle" font-size="10.500" fill="#6e7079">2023-05</text>
<text x="383.19" y="576" text-anchor="middle" font-size="10.500" fill="#6e7079">2023-07</text>
<text x="434.94" y="576" text-anchor="middle" font-size="10.500" fill="#6e7079">2023-09</text>
<text x="486.69" y="576" text-anchor="middle" font-size="10.500" fill="#6e7079">2023-11</text>
</svg>
<div class="t" style="left:580px;top:123px;font-size:14px;word-spacing:-1px;color:#2a2a2a">2023 年 10 月</div>
<div class="abs" style="left:784px;top:118px;width:153px;height:22px;border:1px solid #e0e3e9;border-radius:3px;background:#fff"></div>
<div class="abs" style="left:838px;top:118px;width:1px;height:22px;background:#dcdfe6"></div><div class="abs" style="left:882px;top:118px;width:1px;height:22px;background:#dcdfe6"></div>
<div class="t" style="left:784px;width:55px;text-align:center;top:124.500px;font-size:9.600px;color:#606266">上个月</div>
<div class="t" style="left:839px;width:44px;text-align:center;top:124.500px;font-size:9.600px;color:#606266">今天</div>
<div class="t" style="left:883px;width:54px;text-align:center;top:124.500px;font-size:9.600px;color:#606266">下个月</div>
<div class="abs" style="left:564px;top:150px;width:388px;height:1px;background:#ebeef5"></div>
<div class="wk" style="left:580.4px;top:173.500px">一</div>
<div class="wk" style="left:631.3px;top:173.500px">二</div>
<div class="wk" style="left:682.1px;top:173.500px">三</div>
<div class="wk" style="left:733.0px;top:173.500px">四</div>
<div class="wk" style="left:783.9px;top:173.500px">五</div>
<div class="wk" style="left:834.7px;top:173.500px">六</div>
<div class="wk" style="left:885.6px;top:173.500px">日</div>
<div class="abs" style="left:630.9px;top:456.2px;width:50.9px;height:65.1px;background:#f2f8fe"></div>
<svg class="abs" style="left:570px;top:190px" width="380" height="380" viewBox="570 190 380 380">
<path d="M580.0 196.5H936.5" stroke="#ebeef5" stroke-width="1"/>
<path d="M580.0 261.6H936.5" stroke="#ebeef5" stroke-width="1"/>
<path d="M580.0 326.6H936.5" stroke="#ebeef5" stroke-width="1"/>
<path d="M580.0 391.7H936.5" stroke="#ebeef5" stroke-width="1"/>
<path d="M580.0 456.7H936.5" stroke="#ebeef5" stroke-width="1"/>
<path d="M580.0 521.8H936.5" stroke="#ebeef5" stroke-width="1"/>
<path d="M580.5 196.0V567" stroke="#ebeef5" stroke-width="1"/>
<path d="M631.5 196.0V567" stroke="#ebeef5" stroke-width="1"/>
<path d="M682.5 196.0V567" stroke="#ebeef5" stroke-width="1"/>
<path d="M733.5 196.0V567" stroke="#ebeef5" stroke-width="1"/>
<path d="M783.5 196.0V567" stroke="#ebeef5" stroke-width="1"/>
<path d="M834.5 196.0V567" stroke="#ebeef5" stroke-width="1"/>
<path d="M885.5 196.0V567" stroke="#ebeef5" stroke-width="1"/>
<path d="M936.5 196.0V567" stroke="#ebeef5" stroke-width="1"/>
</svg>
<div class="cal-d o" style="left:587.7px;top:205.0px">09-25</div>
<div class="cal-d o" style="left:638.6px;top:205.0px">09-26</div>
<div class="cal-d o" style="left:689.4px;top:205.0px">09-27</div>
<div class="cal-d o" style="left:740.3px;top:205.0px">09-28</div>
<div class="cal-d o" style="left:791.1px;top:205.0px">09-29</div>
<div class="cal-d o" style="left:842.0px;top:205.0px">09-30</div>
<div class="cal-d" style="left:892.8px;top:205.0px">10-01</div>
<div class="cal-d" style="left:587.7px;top:270.1px">10-02</div>
<div class="cal-d" style="left:638.6px;top:270.1px">10-03</div>
<div class="cal-d" style="left:689.4px;top:270.1px">10-04</div>
<div class="cal-d" style="left:740.3px;top:270.1px">10-05</div>
<div class="cal-d" style="left:791.1px;top:270.1px">10-06</div>
<div class="cal-d" style="left:842.0px;top:270.1px">10-07</div>
<div class="cal-d" style="left:892.8px;top:270.1px">10-08</div>
<div class="cal-d" style="left:587.7px;top:335.1px">10-09</div>
<div class="cal-d" style="left:638.6px;top:335.1px">10-10</div>
<div class="cal-d" style="left:689.4px;top:335.1px">10-11</div>
<div class="cal-d" style="left:740.3px;top:335.1px">10-12</div>
<div class="cal-d" style="left:791.1px;top:335.1px">10-13</div>
<div class="cal-d" style="left:842.0px;top:335.1px">10-14</div>
<div class="cal-d" style="left:892.8px;top:335.1px">10-15</div>
<div class="cal-d" style="left:587.7px;top:400.2px">10-16</div>
<div class="cal-d" style="left:638.6px;top:400.2px">10-17</div>
<div class="cal-d" style="left:689.4px;top:400.2px">10-18</div>
<div class="cal-d" style="left:740.3px;top:400.2px">10-19</div>
<div class="cal-d" style="left:791.1px;top:400.2px">10-20</div>
<div class="cal-d" style="left:842.0px;top:400.2px">10-21</div>
<div class="cal-d" style="left:892.8px;top:400.2px">10-22</div>
<div class="cal-d" style="left:587.7px;top:465.2px">10-23</div>
<div class="cal-d" style="left:638.6px;top:465.2px;color:#409eff">10-24</div>
<div class="cal-d" style="left:689.4px;top:465.2px">10-25</div>
<div class="cal-d" style="left:740.3px;top:465.2px">10-26</div>
<div class="cal-d" style="left:791.1px;top:465.2px">10-27</div>
<div class="cal-d" style="left:842.0px;top:465.2px">10-28</div>
<div class="cal-d" style="left:892.8px;top:465.2px">10-29</div>
<div class="cal-d" style="left:587.7px;top:530.3px">10-30</div>
<div class="cal-d" style="left:638.6px;top:530.3px">10-31</div>
<div class="cal-d o" style="left:689.4px;top:530.3px">11-01</div>
<div class="cal-d o" style="left:740.3px;top:530.3px">11-02</div>
<div class="cal-d o" style="left:791.1px;top:530.3px">11-03</div>
<div class="cal-d o" style="left:842.0px;top:530.3px">11-04</div>
<div class="cal-d o" style="left:892.8px;top:530.3px">11-05</div>
<div class="t" style="left:699.7px;top:310.500px;font-size:12px;color:#d28b45">¥ 299</div>
<div class="t" style="left:801.4px;top:310.500px;font-size:12px;color:#d28b45">¥ 299</div>
<div class="abs" style="left:937.000px;top:576.400px;width:1.600px;height:1.600px;background:#666"></div><div class="abs" style="left:937.000px;top:586.800px;width:1.600px;height:1.600px;background:#666"></div>
</body></html>
